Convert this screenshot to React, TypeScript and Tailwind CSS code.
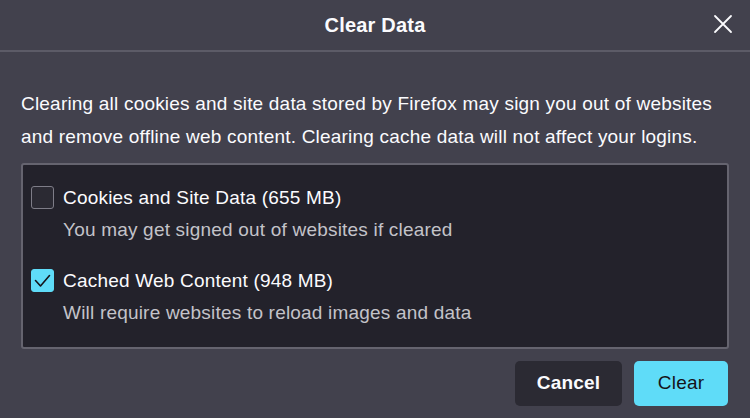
import { useState } from "react";

const font = { fontFamily: '"Liberation Sans", Arial, sans-serif', letterSpacing: "0.2px" };

function Option({
  label,
  hint,
  checked,
  onToggle,
}: {
  label: string;
  hint: string;
  checked: boolean;
  onToggle: () => void;
}) {
  return (
    <div className="flex gap-[9px]">
      <button
        onClick={onToggle}
        className={`mt-[1px] flex h-[23px] w-[23px] shrink-0 items-center justify-center rounded-[3px] border ${
          checked ? "border-[#5fdcf8] bg-[#5fdcf8]" : "border-[#7e7d88] bg-[#2b2a33]"
        }`}
      >
        {checked && (
          <svg width="17" height="14" viewBox="0 0 17 14" fill="none">
            <path d="M1.5 6.5 L6.5 12 L15.5 1.5" stroke="#15141a" strokeWidth="1.6" strokeLinecap="round" strokeLinejoin="round" />
          </svg>
        )}
      </button>
      <div className="flex flex-col">
        <span className="text-[19px] leading-[25px] text-[#fbfbfe]">{label}</span>
        <span className="mt-[7px] text-[19px] leading-[25px] text-[#c3c3c9]">{hint}</span>
      </div>
    </div>
  );
}

export default function App() {
  const [cookies, setCookies] = useState(false);
  const [cache, setCache] = useState(true);

  return (
    <div className="flex h-[418px] w-[750px] flex-col bg-[#42414d]" style={font}>
      <div className="relative flex h-[52px] shrink-0 items-center justify-center border-b-2 border-[#5c5b67]">
        <span className="text-[20px] font-bold text-[#fbfbfe]">Clear Data</span>
        <button className="absolute right-[15px] top-[12px] p-[2px]">
          <svg width="20" height="20" viewBox="0 0 20 20">
            <path d="M2 2 L18 18 M18 2 L2 18" stroke="#fbfbfe" strokeWidth="1.8" strokeLinecap="round" />
          </svg>
        </button>
      </div>

      <div className="flex flex-col px-[21px] pt-[35px]">
        <p className="text-[19px] leading-[33px] text-[#fbfbfe]">
          Clearing all cookies and site data stored by Firefox may sign you out of websites
          <br />
          and remove offline web content. Clearing cache data will not affect your logins.
        </p>

        <div className="mt-[10px] flex h-[186px] w-[708px] flex-col gap-[26px] rounded-[3px] border-2 border-[#65646f] bg-[#23222b] pl-[8px] pt-[20px]">
          <Option
            label="Cookies and Site Data (655 MB)"
            hint="You may get signed out of websites if cleared"
            checked={cookies}
            onToggle={() => setCookies(!cookies)}
          />
          <Option
            label="Cached Web Content (948 MB)"
            hint="Will require websites to reload images and data"
            checked={cache}
            onToggle={() => setCache(!cache)}
          />
        </div>

        <div className="mt-[12px] flex justify-end gap-[12px] pr-[1px]">
          <button className="h-[45px] w-[107px] rounded-[5px] bg-[#2b2a33] text-[19px] font-bold text-[#fbfbfe]">
            Cancel
          </button>
          <button className="h-[45px] w-[94px] rounded-[5px] bg-[#5fdcf8] text-[19px] text-[#15141a]">
            Clear
          </button>
        </div>
      </div>
    </div>
  );
}
